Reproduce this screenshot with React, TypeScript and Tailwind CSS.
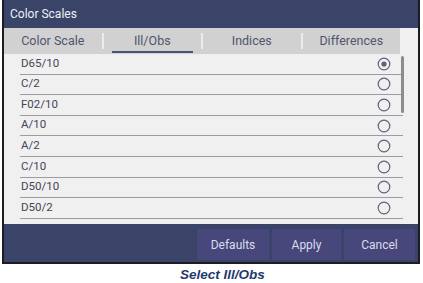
import { useState } from 'react';

const tabs = ['Color Scale', 'Ill/Obs', 'Indices', 'Differences'];
const illObs = ['D65/10', 'C/2', 'F02/10', 'A/10', 'A/2', 'C/10', 'D50/10', 'D50/2'];

function Radio({ checked }: { checked: boolean }) {
  return (
    <svg width="14" height="14" viewBox="0 0 14 14" className="shrink-0">
      <circle cx="7" cy="7" r="5.8" fill="none" stroke="#5d6279" strokeWidth="1.2" />
      {checked && <circle cx="7" cy="7" r="2.6" fill="#5d6279" />}
    </svg>
  );
}

export default function App() {
  const [tab, setTab] = useState(1);
  const [selected, setSelected] = useState('D65/10');

  return (
    <div className="w-[423px] h-[283px] bg-white pl-[2px]" style={{ fontFamily: 'Roboto, "Liberation Sans", sans-serif' }}>
      <div className="w-[418px] h-[264px] flex flex-col border-x-2 border-b-2 border-[#1c1c22] bg-[#f0f0f0]">
        {/* Title bar */}
        <div className="h-[28px] shrink-0 bg-[#3a4468] flex items-center pl-[6px] text-[12px] text-[#eef0f6]">
          Color Scales
        </div>

        {/* Tabs */}
        <div className="h-[26px] shrink-0 flex">
          <div className="w-[396px] flex items-center bg-[#d1d1d1]">
            {tabs.map((t, i) => (
              <div key={t} className="contents">
                {i > 0 && <div className="w-[2px] h-4 bg-[#ececec] shrink-0" />}
                <button
                  onClick={() => setTab(i)}
                  className="relative flex-1 h-full flex items-center justify-center text-[12.5px] text-[#50556c]"
                >
                  {t}
                  {tab === i && <span className="absolute left-2 right-2 bottom-[1px] h-[2px] bg-[#4d5373]" />}
                </button>
              </div>
            ))}
          </div>
          <div className="flex-1 bg-[#f0f0f0]" />
        </div>

        {/* List */}
        <div className="relative h-[170px] shrink-0 overflow-hidden">
          <div className="ml-[16px] mr-[15px]">
            {illObs.map((v) => (
              <div
                key={v}
                onClick={() => setSelected(v)}
                className="h-[20.6px] flex items-center justify-between pl-[1px] pr-[12px] border-b-[1.5px] border-[#9c9c9c] text-[11.5px] text-[#434656]"
              >
                <span className="-mt-[1px]">{v}</span>
                <Radio checked={selected === v} />
              </div>
            ))}
          </div>
          <div className="absolute left-[397px] top-[2px] w-[3px] h-[57px] rounded-full bg-[#8d8d8d]" />
        </div>

        {/* Footer */}
        <div className="flex-1 bg-[#3a4468] flex justify-end items-start gap-[3px] pt-[5px] pr-[3px]">
          <button className="w-[72px] h-[31px] bg-[#48477b] text-[12px] text-[#dcdcec]">Defaults</button>
          <button className="w-[69px] h-[31px] bg-[#48477b] text-[12px] text-[#dcdcec]">Apply</button>
          <button className="w-[71px] h-[31px] bg-[#48477b] text-[12px] text-[#dcdcec]">Cancel</button>
        </div>
      </div>

      <div
        className="h-[19px] pt-[3px] pl-[20px] flex items-center justify-center text-[13.5px] font-bold italic text-[#1f3b6e]"
        style={{ fontFamily: '"Liberation Sans", Arial, sans-serif' }}
      >
        Select Ill/Obs
      </div>
    </div>
  );
}
